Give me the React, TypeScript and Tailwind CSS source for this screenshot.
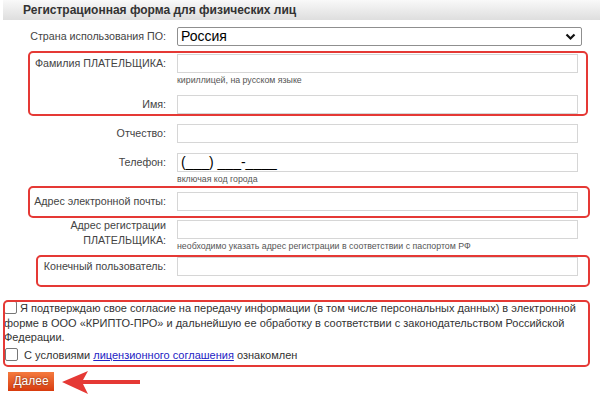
import React from "react";

const font = { fontFamily: '"Liberation Sans", Arial, sans-serif' };

function Row({ label, children, className = "" }: { label: React.ReactNode; children: React.ReactNode; className?: string }) {
  return (
    <div className={"flex items-start " + className}>
      <div className="w-[167px] shrink-0 text-right text-[10.7px] leading-[19px] text-[#444] pr-[1px]">{label}</div>
      <div className="ml-[10px] w-[401px]">{children}</div>
    </div>
  );
}

function Input({ children }: { children?: React.ReactNode }) {
  return (
    <div className="h-[19px] w-[401px] border border-[#d6d6d6] bg-white text-[14px] leading-[17px] text-black pl-[3px]">
      {children}
    </div>
  );
}

function Hint({ children }: { children: React.ReactNode }) {
  return <div className="text-[8.8px] leading-[12px] text-[#555] mt-[1px]">{children}</div>;
}

function Box() {
  return <span className="inline-block align-[-2px] w-[13px] h-[13px] border border-[#767676] rounded-[2px] bg-white mr-[3px]" />;
}

export default function App() {
  return (
    <div style={font} className="relative w-[600px] h-[414px] bg-white overflow-hidden">
      <div className="ml-[3px] h-[20px] bg-gradient-to-b from-[#f9f9f9] to-[#dedede] pl-[20px] text-[12px] font-bold leading-[20px] text-[#333]">
        Регистрационная форма для физических лиц
      </div>

      <Row label="Страна использования ПО:" className="mt-[7px]">
        <div className="h-[19px] w-[405px] border border-[#8f8f8f] rounded-[2px] bg-white flex items-center justify-between pl-[3px] pr-[5px]">
          <span className="text-[14px] leading-[17px] text-black">Россия</span>
          <svg width="11" height="8" viewBox="0 0 11 8"><path d="M1.5 1.5 L5.5 5.5 L9.5 1.5" stroke="#111" strokeWidth="2.2" fill="none" /></svg>
        </div>
      </Row>

      <Row label="Фамилия ПЛАТЕЛЬЩИКА:" className="mt-[8px]">
        <Input />
        <Hint>кириллицей, на русском языке</Hint>
      </Row>

      <Row label="Имя:" className="mt-[9px]">
        <Input />
      </Row>

      <Row label="Отчество:" className="mt-[10px]">
        <Input />
      </Row>

      <Row label="Телефон:" className="mt-[10px]">
        <Input>(___) ___-____</Input>
        <Hint>включая код города</Hint>
      </Row>

      <Row label="Адрес электронной почты:" className="mt-[7px]">
        <Input />
      </Row>

      <Row label={<div className="leading-[15px] -mt-[2px]">Адрес регистрации<br />ПЛАТЕЛЬЩИКА:</div>} className="mt-[9px]">
        <Input />
        <Hint>необходимо указать адрес регистрации в соответствии с паспортом РФ</Hint>
      </Row>

      <Row label="Конечный пользователь:" className="mt-[5px]">
        <Input />
      </Row>

      <div className="mt-[25px] ml-[4px] w-[580px] text-[11px] leading-[14.5px] text-[#333]">
        <Box />Я подтверждаю свое согласие на передачу информации (в том числе персональных данных) в электронной форме в ООО «КРИПТО-ПРО» и дальнейшую ее обработку в соответствии с законодательством Российской Федерации.
      </div>
      <div className="mt-[3px] ml-[5px] text-[11px] leading-[15px] text-[#333]">
        <Box /><span className="ml-[3px]">С условиями </span>
        <a className="text-[#2323c4] underline">лицензионного соглашения</a> ознакомлен
      </div>

      <div className="mt-[9px] ml-[8px] w-[46px] h-[19px] bg-gradient-to-b from-[#f47a3e] to-[#d83a0c] text-white text-[12px] leading-[19px] text-center [text-shadow:0_0_2px_rgba(0,0,0,0.5)]">
        Далее
      </div>

      {/* annotation overlays */}
      <div className="absolute left-[28px] top-[51px] w-[560px] h-[65px] border-[2.5px] border-[#e53935] rounded-[5px]" />
      <div className="absolute left-[28px] top-[186px] w-[562px] h-[32px] border-[2.5px] border-[#e53935] rounded-[5px]" />
      <div className="absolute left-[36px] top-[255px] w-[554px] h-[32px] border-[2.5px] border-[#e53935] rounded-[5px]" />
      <div className="absolute left-[3px] top-[300px] w-[587px] h-[67px] border-[2.5px] border-[#e53935] rounded-[5px]" />
      <svg className="absolute left-[60px] top-[370px]" width="84" height="26" viewBox="0 0 84 26">
        <path d="M2 12 L28 1 L23 10 L80 10 L80 14 L23 14 L28 24 Z" fill="#e53935" />
      </svg>
    </div>
  );
}
